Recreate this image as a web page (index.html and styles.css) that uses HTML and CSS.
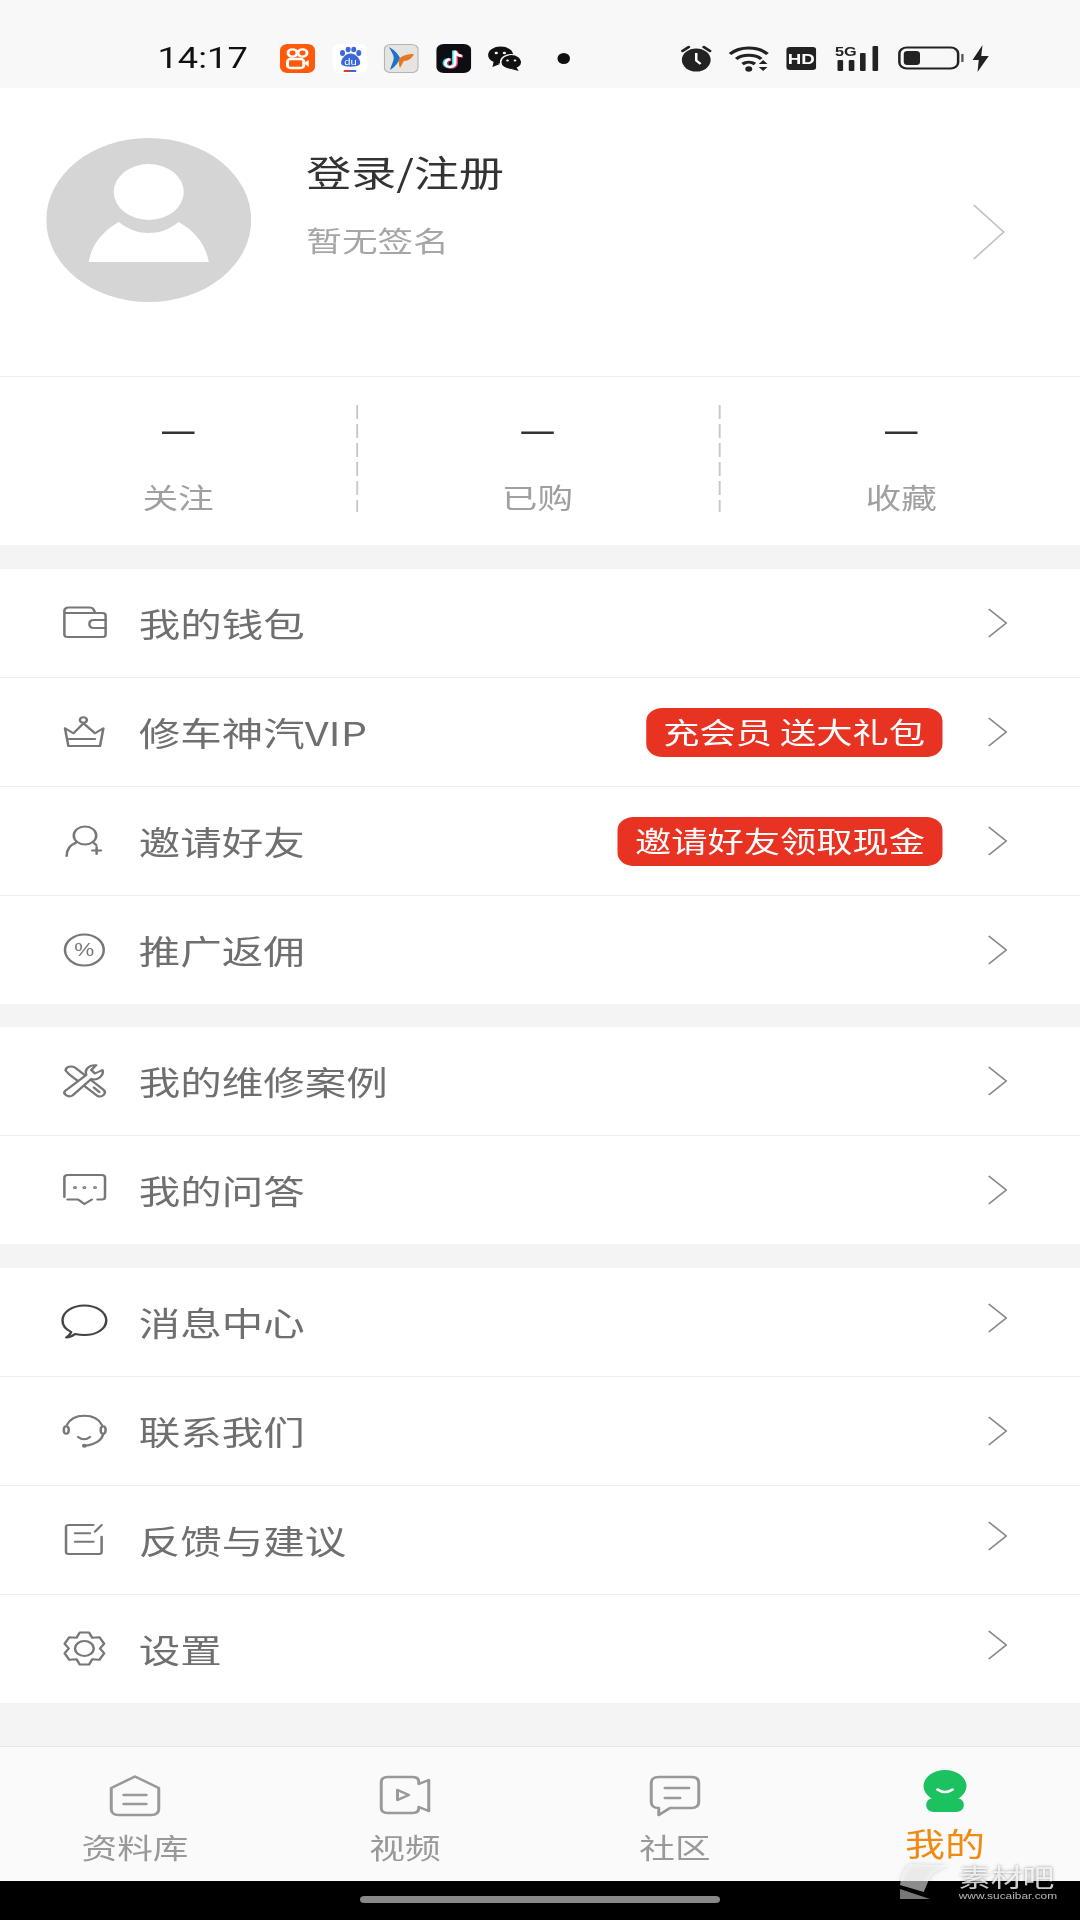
FILE: index.html
```html
<!DOCTYPE html>
<html lang="zh-CN">
<head>
    <meta charset="UTF-8">
    <meta name="viewport" content="width=device-width, initial-scale=1.0">
    <title>我的</title>
    <link rel="stylesheet" href="styles.css">
</head>
<body>

<svg class="defs" width="0" height="0">
    <symbol id="chev" viewBox="0 0 16 30"><polyline points="1,1 15,15 1,29" fill="none" stroke="#8a8a8a" stroke-width="1.5"/></symbol>
</svg>

<div class="screen">

    <div class="status">
        <span class="time">14:17</span>
        <div class="apps">
            <svg class="app" viewBox="0 0 28 29"><rect width="28" height="29" rx="6" fill="#ff5a0a"/><circle cx="10" cy="9" r="3.6" fill="none" stroke="#fff" stroke-width="2.4"/><circle cx="18" cy="9" r="3.6" fill="none" stroke="#fff" stroke-width="2.4"/><rect x="6" y="15" width="13" height="9" rx="2.5" fill="none" stroke="#fff" stroke-width="2.4"/><path d="M19 19l4-3v7z" fill="#fff"/></svg>
            <svg class="app" viewBox="0 0 28 29"><rect width="28" height="29" rx="6" fill="#fff"/><g fill="#3a68d8"><ellipse cx="8" cy="9" rx="2" ry="3"/><ellipse cx="12.5" cy="5.5" rx="2" ry="2.8"/><ellipse cx="17" cy="5.5" rx="2" ry="2.8"/><ellipse cx="21" cy="9" rx="2" ry="3"/><path d="M14.500 9.500C10 9.500 6 16 7 20c1 3.500 14 3.500 15 0 1-4-3-10.500-7.500-10.500z"/></g><text x="14.500" y="21" class="du">du</text><rect x="9" y="26" width="5" height="2" fill="#e33"/><rect x="14" y="26" width="5" height="2" fill="#3a68d8"/></svg>
            <svg class="app" viewBox="0 0 28 29"><rect x=".5" y=".5" width="27" height="28" rx="5" fill="#e6e4e0" stroke="#b4b4b4"/><path d="M4 3c5 3 8 8 9 11-1 4-4 9-8 12 1-5 3-9 3-12S6 7 4 3z" fill="#1d73c9"/><path d="M12 15c3-4 8-5 12-5-1 4-4 7-8 7l-3 7c-1-3-1-6-1-9z" fill="#e8761e"/></svg>
            <svg class="app" viewBox="0 0 28 29"><rect width="28" height="29" rx="6" fill="#0d0d14"/><path d="M15 6v12.500a3.800 3.800 0 1 1-3.800-3.800M15 6c.4 3 2.400 5 5.400 5.300" fill="none" stroke="#25e0e6" stroke-width="2.800" transform="translate(-1 .5)"/><path d="M15 6v12.500a3.800 3.800 0 1 1-3.800-3.800M15 6c.4 3 2.400 5 5.400 5.300" fill="none" stroke="#f5305c" stroke-width="2.800" transform="translate(1 1)"/><path d="M15 6v12.500a3.800 3.800 0 1 1-3.800-3.800M15 6c.4 3 2.400 5 5.400 5.300" fill="none" stroke="#fff" stroke-width="2.400" transform="translate(0 .7)"/></svg>
            <svg class="app" viewBox="0 0 28 29"><ellipse cx="10.500" cy="11" rx="10" ry="8.500" fill="#111"/><path d="M5 17l-1 6 6-3z" fill="#111"/><ellipse cx="19" cy="18" rx="8.500" ry="7.500" fill="#111" stroke="#f8f8f8" stroke-width="1.200"/><path d="M23 23l2 4-6-2z" fill="#111"/><circle cx="7" cy="9" r="1.300" fill="#f8f8f8"/><circle cx="13.500" cy="9" r="1.300" fill="#f8f8f8"/><circle cx="16" cy="16.500" r="1.100" fill="#f8f8f8"/><circle cx="22" cy="16.500" r="1.100" fill="#f8f8f8"/></svg>
            <span class="dot"></span>
        </div>
        <div class="sys">
            <svg class="s-alarm" viewBox="0 0 26 27"><circle cx="13" cy="15" r="11.500" fill="#222"/><path d="M2 6l5-4M24 6l-5-4" stroke="#222" stroke-width="2.400" stroke-linecap="round"/><path d="M13 8v7.500l3.500 3.500" fill="none" stroke="#fff" stroke-width="2"/></svg>
            <svg class="s-wifi" viewBox="0 0 34 27"><g fill="none" stroke="#222" stroke-width="3"><path d="M2 9C10 1 24 1 32 9"/><path d="M7 14c5-5 15-5 20 0"/><path d="M12 19c3-2.500 7-2.500 10 0"/></g><circle cx="17" cy="24" r="2.800" fill="#222"/><path d="M25 19l3.500-4 3.500 4zM25 22l3.500 4 3.500-4z" fill="#222"/></svg>
            <svg class="s-hd" viewBox="0 0 24 23"><rect width="24" height="23" rx="3" fill="#222"/><text x="12" y="17" class="hd">HD</text></svg>
            <svg class="s-sig" viewBox="0 0 36 26"><text x="0" y="11" class="fiveg">5G</text><g fill="#222"><rect x="2" y="15" width="4.500" height="11" rx="1"/><rect x="11" y="15" width="4.500" height="11" rx="1"/><rect x="20" y="8" width="4.500" height="18" rx="1"/><rect x="30" y="1" width="4.500" height="25" rx="1"/></g></svg>
            <svg class="s-bat" viewBox="0 0 53 24"><rect x="1.500" y="1.500" width="47" height="21" rx="6" fill="none" stroke="#222" stroke-width="2"/><rect x="5" y="5" width="13" height="14" rx="3" fill="#222"/><rect x="51" y="8" width="2" height="8" fill="#555"/></svg>
            <svg class="s-bolt" viewBox="0 0 15 27"><path d="M9 0L1 15h5l-1 12 9-16H8z" fill="#222"/></svg>
        </div>
    </div>

    <div class="profile">
        <div class="avatar">
            <svg viewBox="0 0 164 164"><circle cx="82" cy="82" r="82" fill="#d5d5d5"/><circle cx="82" cy="54" r="28" fill="#fff"/><path d="M34 124C36 108 44 94 58 84C66 92 74 95 82 95C90 95 98 92 106 84C120 94 128 108 130 124Z" fill="#fff"/></svg>
        </div>
        <div class="who">
            <div class="who-name">登录/注册</div>
            <div class="who-sign">暂无签名</div>
        </div>
        <svg class="profile-chev" viewBox="0 0 26 56"><polyline points="1,1 25,28 1,55" fill="none" stroke="#c4c4c4" stroke-width="1.500"/></svg>
    </div>

    <div class="stats">
        <div class="stat"><span class="stat-num">—</span><span class="stat-label">关注</span></div>
        <div class="stat"><span class="stat-num">—</span><span class="stat-label">已购</span></div>
        <div class="stat"><span class="stat-num">—</span><span class="stat-label">收藏</span></div>
    </div>

    <div class="group group-first">
        <div class="row">
            <svg class="ico" viewBox="0 0 36 36"><path d="M1.500 30V6Q1.500 2.500 5 2.500H22Q25 2.500 26 8H32Q34.500 8 34.500 10.500V29.500Q34.500 32 32 32H4Q1.500 32 1.500 29.500V8H26"/><path d="M34.500 15H25Q21.500 15 21.500 19T25 23H34.500"/></svg>
            <span class="label">我的钱包</span>
            <svg class="chev"><use href="#chev"/></svg>
        </div>
        <div class="row">
            <svg class="ico" viewBox="0 0 36 36"><circle cx="16.700" cy="6" r="2.800"/><path d="M2 14.300L8.700 19.300L16.700 9.300L26 19.300L32.700 14.300L30 32H4.700Z"/><path d="M5 25H26"/></svg>
            <span class="label">修车神汽VIP</span>
            <span class="tag">充会员 送大礼包</span>
            <svg class="chev"><use href="#chev"/></svg>
        </div>
        <div class="row">
            <svg class="ico" viewBox="0 0 36 36"><circle cx="18" cy="12.500" r="9"/><path d="M3.300 33C3.300 27 6 22 11 19.500M25 20L27 22"/><path d="M27.300 24V31M23.800 27.500H30.800"/></svg>
            <span class="label">邀请好友</span>
            <span class="tag">邀请好友领取现金</span>
            <svg class="chev"><use href="#chev"/></svg>
        </div>
        <div class="row">
            <svg class="ico" viewBox="0 0 36 36"><circle cx="17.500" cy="18" r="15.500"/><text x="17.500" y="24.500" class="pct">%</text></svg>
            <span class="label">推广返佣</span>
            <svg class="chev"><use href="#chev"/></svg>
        </div>
    </div>

    <div class="group group-next">
        <div class="row">
            <svg class="ico" viewBox="0 0 36 36"><path d="M2.500 7.500C2.500 3.500 7 2.500 10 4.500L33 27C35.500 30 32 35 28 33L5 11Z" fill="#fff"/><path d="M25 24.500L29.500 29"/><path d="M2 28L19 12C17.500 7 21 1.500 27 2.200L23 7L26 10.500L32 7C33.500 13 27.500 18 23 16L8 32.500C4.500 35 0 31 2 28Z" fill="#fff"/></svg>
            <span class="label">我的维修案例</span>
            <svg class="chev"><use href="#chev"/></svg>
        </div>
        <div class="row">
            <svg class="ico" viewBox="0 0 36 36"><path d="M1.500 25V5.500Q1.500 3 4 3H31.500Q34 3 34 5.500V25Q34 27.500 31.500 27.500H28M23.500 27.500L17.500 32L12.500 27.500H4"/><circle cx="10" cy="15.500" r=".6"/><circle cx="17.500" cy="15.500" r=".6"/><circle cx="26" cy="15.500" r=".6"/></svg>
            <span class="label">我的问答</span>
            <svg class="chev"><use href="#chev"/></svg>
        </div>
    </div>

    <div class="group group-next2">
        <div class="row">
            <svg class="ico ico-dark" viewBox="0 0 36 36"><path d="M7 28C2 25 0 21 0 16.500C0 8 8 1.500 17.500 1.500S35 8 35 16.500S27 31 17.500 31C14 31 12 30.500 10 30C8 32 5.500 33.500 3 33.500C5 32 6.500 30 7 28Z"/></svg>
            <span class="label">消息中心</span>
            <svg class="chev chev-up"><use href="#chev"/></svg>
        </div>
        <div class="row">
            <svg class="ico" viewBox="0 0 36 36"><path d="M3.500 12C6 5.500 11 2.700 17.500 2.700S29 5.500 31.500 12"/><ellipse cx="3" cy="17" rx="2" ry="3.800"/><ellipse cx="32.500" cy="17" rx="2" ry="3.800"/><path d="M12.500 24Q17.300 28.500 22 24"/><path d="M32.500 21C31.500 27 26 32 18.500 32.700"/><circle cx="17.500" cy="32.700" r="1"/></svg>
            <span class="label">联系我们</span>
            <svg class="chev"><use href="#chev"/></svg>
        </div>
        <div class="row">
            <svg class="ico" viewBox="0 0 36 36"><path d="M24.700 3H5Q2.800 3 2.800 5V30Q2.800 32 5 32H29.300Q31.300 32 31.300 30V14.700"/><path d="M31.300 3L26 9.700"/><path d="M10 11.300H22M10 19.700H24.700"/></svg>
            <span class="label">反馈与建议</span>
            <svg class="chev chev-up"><use href="#chev"/></svg>
        </div>
        <div class="row">
            <svg class="ico" viewBox="0 0 36 36"><path d="M13.800 1.400H21.200L23.750 6.700L29.600 6.250L33.300 12.700L30 17.500L33.300 22.300L29.600 28.750L23.750 28.300L21.200 33.600H13.800L11.250 28.300L5.400 28.750L1.700 22.300L5 17.500L1.700 12.700L5.400 6.250L11.250 6.700Z"/><circle cx="17.500" cy="17.500" r="7.500"/></svg>
            <span class="label">设置</span>
            <svg class="chev chev-up"><use href="#chev"/></svg>
        </div>
    </div>

    <div class="tabs">
        <div class="tab">
            <svg class="tab-ico" viewBox="0 0 42 42"><path d="M21 1.500L40 13V34Q40 40 34 40H8Q2 40 2 34V13Z"/><path d="M12 20H30M12 29H30"/></svg>
            <span class="tab-label">资料库</span>
        </div>
        <div class="tab">
            <svg class="tab-ico" viewBox="0 0 42 42"><path d="M7 2H27Q32 2 32 7V9L40 5V36L32 32V33Q32 38 27 38H7Q2 38 2 33V7Q2 2 7 2Z"/><path d="M15 15L24 20L15 25Z"/></svg>
            <span class="tab-label">视频</span>
        </div>
        <div class="tab">
            <svg class="tab-ico" viewBox="0 0 42 42"><path d="M8 2H34Q40 2 40 8V27Q40 33 34 33H17L8 40V33Q2 33 2 27V8Q2 2 8 2Z"/><path d="M13 13H32M13 23H25"/></svg>
            <span class="tab-label">社区</span>
        </div>
        <div class="tab tab-on">
            <svg class="tab-ico-on" viewBox="0 0 42 42"><ellipse cx="21" cy="11" rx="17.200" ry="16" fill="#1cc260"/><rect x="6" y="23" width="30" height="14" rx="6" fill="#1cc260"/><path d="M15 14.500Q21 19.500 27 14.500" fill="none" stroke="#fff" stroke-width="2.400" stroke-linecap="round"/></svg>
            <span class="tab-label">我的</span>
        </div>
    </div>

    <div class="homebar"><span class="pill"></span></div>

    <div class="mark">
        <svg class="mark-logo" viewBox="0 0 39 38"><path d="M0 24C1 14 4 7 8 3C18 4 30 4 39 4C32 8 26 12 24 16L19 31Z" fill="#fff" fill-opacity=".55"/><path d="M0 28L24 38H0Z" fill="#c8c8c8" fill-opacity=".6"/></svg>
        <div class="mark-text">
            <div class="mark-name">素材吧</div>
            <div class="mark-url">www.sucaibar.com</div>
        </div>
    </div>

</div>

</body>
</html>
```

FILE: styles.css
```css
/* the capture is stretched sideways, so the screen is laid out 864 wide and scaled up */
* {
    box-sizing: border-box;
}

body {
    margin: 0;
    padding: 0;
    background-color: #000;
    font-family: "Noto Sans CJK SC", sans-serif;
    overflow: hidden;
}

.defs {
    display: block;
    height: 0;
}

.screen {
    position: relative;
    width: 864px;
    height: 1920px;
    display: flex;
    flex-direction: column;
    background-color: #f4f4f4;
    transform: scaleX(1.25);
    transform-origin: 0 0;
}

/* status bar */
.status {
    height: 88px;
    flex: none;
    display: flex;
    align-items: center;
    padding: 28px 72px 0 126px;
    background-color: #f8f8f8;
}

.time {
    width: 73px;
    font-family: Roboto, sans-serif;
    font-size: 29px;
    line-height: 34px;
    color: #111;
}

.apps {
    display: flex;
    align-items: center;
    gap: 13.5px;
    margin-left: 25px;
}

.app {
    width: 28px;
    height: 29px;
}

.du {
    font-family: "Liberation Sans", sans-serif;
    font-size: 9px;
    fill: #fff;
    text-anchor: middle;
}

.dot {
    width: 10px;
    height: 11px;
    margin-left: 14px;
    border-radius: 50%;
    background-color: #111;
}

.sys {
    display: flex;
    align-items: center;
    margin-left: auto;
}

.s-alarm { width: 26px; height: 27px; }
.s-wifi { width: 34px; height: 27px; margin-left: 12px; }
.s-hd { width: 24px; height: 23px; margin-left: 13px; }
.s-sig { width: 36px; height: 26px; margin-left: 15px; }
.s-bat { width: 53px; height: 24px; margin-left: 14px; }
.s-bolt { width: 15px; height: 27px; margin-left: 6px; }

.hd {
    font-family: "Liberation Sans", sans-serif;
    font-size: 15px;
    font-weight: bold;
    fill: #fff;
    text-anchor: middle;
}

.fiveg {
    font-family: "Liberation Sans", sans-serif;
    font-size: 13px;
    font-weight: bold;
    fill: #222;
}

/* profile */
.profile {
    height: 289px;
    flex: none;
    display: flex;
    align-items: flex-start;
    padding: 50px 60px 0 37px;
    background-color: #fff;
    border-bottom: 1px solid #ececec;
}

.avatar {
    width: 164px;
    height: 164px;
    flex: none;
}

.avatar svg {
    display: block;
    width: 164px;
    height: 164px;
}

.who {
    margin-left: 44px;
    padding-top: 8px;
}

.who-name {
    font-size: 36px;
    line-height: 50px;
    color: #333;
}

.who-sign {
    margin-top: 24px;
    font-size: 28.5px;
    line-height: 40px;
    color: #a6a6a6;
}

.profile-chev {
    width: 26px;
    height: 56px;
    margin: 66px 0 0 auto;
}

/* numbers under the profile */
.stats {
    height: 168px;
    flex: none;
    display: grid;
    grid-template-columns: 285px 290px 289px;
    padding-top: 28px;
    background-color: #fff;
}

.stat {
    height: 107px;
    display: flex;
    flex-direction: column;
    align-items: center;
    padding-top: 7px;
    background: repeating-linear-gradient(to bottom, #c8c8c8 0 14px, transparent 14px 19px) left top / 1.5px 100% no-repeat;
}

.stat:first-child {
    background: none;
}

.stat:last-child {
    padding-left: 3px;
}

.stat-num {
    height: 70px;
    flex: none;
    font-family: "Liberation Sans", sans-serif;
    font-size: 26px;
    font-weight: bold;
    line-height: 38px;
    color: #333;
}

.stat-label {
    flex: none;
    font-size: 28.5px;
    line-height: 30px;
    color: #a0a0a0;
}

/* menu */
.group {
    flex: none;
    background-color: #fff;
}

.group-first { margin-top: 24px; }
.group-next { margin-top: 23px; }
.group-next2 { margin-top: 24px; }

.row {
    height: 109px;
    display: flex;
    align-items: center;
    padding: 0 58px 0 50px;
    border-bottom: 1px solid #eeeeee;
}

.row:last-child {
    height: 108px;
    border-bottom: none;
}

.ico {
    width: 36px;
    height: 36px;
    flex: none;
    overflow: visible;
    fill: none;
    stroke: #777;
    stroke-width: 2;
    stroke-linejoin: round;
    stroke-linecap: round;
}

.ico-dark {
    stroke: #444;
}

.pct {
    font-family: "Liberation Sans", sans-serif;
    font-size: 18px;
    fill: #777;
    stroke: none;
    text-anchor: middle;
}

.label {
    margin-left: 25px;
    font-size: 33.2px;
    line-height: 46px;
    color: #6f6f6f;
}

.tag {
    height: 49px;
    margin-left: auto;
    padding: 0 14px;
    border-radius: 13px;
    background-color: #e83323;
    color: #fff;
    font-size: 29px;
    line-height: 46px;
}

.chev {
    width: 16px;
    height: 30px;
    flex: none;
    margin-left: auto;
}

.tag + .chev {
    margin-left: 36px;
}

.chev-up {
    margin-bottom: 8px;
}

/* bottom tabs */
.tabs {
    height: 135px;
    flex: none;
    display: grid;
    grid-template-columns: repeat(4, 1fr);
    margin-top: auto;
    padding-top: 28px;
    background-color: #fafafa;
    border-top: 1px solid #e8e8e8;
}

.tab {
    display: flex;
    flex-direction: column;
    align-items: center;
}

.tab-ico {
    width: 42px;
    height: 42px;
    fill: none;
    stroke: #999;
    stroke-width: 2.4;
    stroke-linejoin: round;
    stroke-linecap: round;
}

.tab-ico-on {
    width: 42px;
    height: 42px;
    overflow: visible;
}

.tab-label {
    margin-top: 10px;
    font-size: 28.5px;
    line-height: 40px;
    color: #999;
}

.tab-on .tab-label {
    margin-top: 3px;
    font-size: 32px;
    line-height: 44px;
    color: #f08a12;
}

.homebar {
    height: 39px;
    flex: none;
    display: flex;
    justify-content: center;
    padding-top: 15px;
    background-color: #000;
}

.pill {
    width: 288px;
    height: 7px;
    border-radius: 4px;
    background-color: #888;
}

/* watermark stamped over the corner */
.mark {
    position: absolute;
    left: 720px;
    top: 1861px;
    display: flex;
    gap: 8px;
}

.mark-logo {
    width: 39px;
    height: 38px;
    filter: drop-shadow(0 0 2px rgba(0, 0, 0, 0.3));
}

.mark-name {
    width: 78px;
    font-size: 25.5px;
    line-height: 30px;
    color: rgba(255, 255, 255, 0.8);
    text-shadow: 0 0 3px rgba(0, 0, 0, 0.45);
}

.mark-url {
    font-family: "Liberation Sans", sans-serif;
    font-size: 9.5px;
    line-height: 10px;
    color: rgba(255, 255, 255, 0.7);
}
```
